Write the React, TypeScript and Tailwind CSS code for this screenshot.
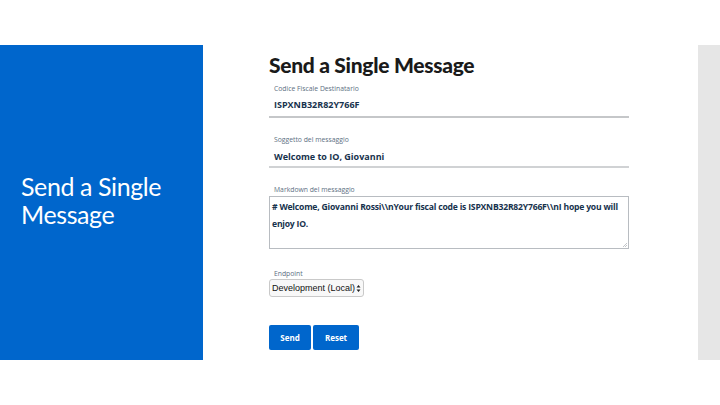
export default function App() {
  return (
    <div className="w-[720px] h-[405px] bg-white pt-[45px] font-['Open_Sans',sans-serif]">
      <div className="flex h-[315px]">
        {/* Left title panel */}
        <div className="w-[203px] bg-[#0066cc] flex items-center pl-[21px] pb-[6px]">
          <h2 className="text-white text-[25px] leading-[28px] font-['Lato',sans-serif] tracking-[-0.4px]">
            Send a Single
            <br />
            Message
          </h2>
        </div>

        {/* Form */}
        <div className="flex-1 pl-[66px] pt-[6px]">
          <div className="w-[360px] text-[#17324d]">
            <h1 className="text-[21px] leading-[28px] font-black font-['Lato',sans-serif] text-[#1a1a1a] tracking-[-0.3px]">
              Send a Single Message
            </h1>

            <div className="mt-[5px]">
              <label className="block text-[6.8px] leading-[10px] text-[#5c6f82] ml-[5px]">
                Codice Fiscale Destinatario
              </label>
              <div className="mt-[5px] text-[9px] leading-[12px] font-bold ml-[5px]">ISPXNB32R82Y766F</div>
              <div className="mt-[5px] h-[2px] bg-[#c5c7c9]" />
            </div>

            <div className="mt-[17px]">
              <label className="block text-[6.8px] leading-[10px] text-[#5c6f82] ml-[5px]">
                Soggetto del messaggio
              </label>
              <div className="mt-[6px] text-[9px] leading-[12px] font-bold ml-[5px]">Welcome to IO, Giovanni</div>
              <div className="mt-[3px] h-[2px] bg-[#d0d2d4]" />
            </div>

            <div className="mt-[17px]">
              <label className="block text-[6.8px] leading-[10px] text-[#5c6f82] ml-[5px]">
                Markdown del messaggio
              </label>
              <div className="mt-[1px] h-[53px] border border-[#b8bcc1] px-[2px] pt-[2px] relative overflow-hidden">
                <p className="text-[8.6px] leading-[17px] font-bold tracking-[-0.2px] whitespace-nowrap">
                  # Welcome, Giovanni Rossi\\nYour fiscal code is ISPXNB32R82Y766F\\nI hope you will
                  <br />
                  enjoy IO.
                </p>
                <svg className="absolute right-[1px] bottom-[1px]" width="5" height="5" viewBox="0 0 5 5">
                  <path d="M5 1 L1 5 M5 3 L3 5" stroke="#9aa0a6" strokeWidth="0.6" />
                </svg>
              </div>
            </div>

            <div className="mt-[20px]">
              <label className="block text-[6.8px] leading-[10px] text-[#5c6f82] ml-[5px]">Endpoint</label>
              <div className="flex items-center gap-[1px] h-[18px] w-[95px] border border-[#c9c9c9] rounded-[3px] bg-[#f8f8f8] pl-[2px] pr-[2px] text-[9px] leading-[12px] text-[#111] font-['Liberation_Sans',sans-serif]">
                <span className="flex-1 whitespace-nowrap">Development (Local)</span>
                <svg className="shrink-0" width="5" height="9" viewBox="0 0 5 9">
                  <path d="M0.5 3.5 L2.5 1 L4.5 3.5 Z M0.5 5.5 L2.5 8 L4.5 5.5 Z" fill="#222" />
                </svg>
              </div>
            </div>

            <div className="mt-[28px] flex gap-[2px]">
              <button className="w-[42px] h-[25px] bg-[#0066cc] rounded-[2px] text-white text-[8px] font-bold">
                Send
              </button>
              <button className="w-[46px] h-[25px] bg-[#0066cc] rounded-[2px] text-white text-[8px] font-bold">
                Reset
              </button>
            </div>
          </div>
        </div>

        {/* Right gray strip */}
        <div className="w-[22px] bg-[#e6e6e6]" />
      </div>
    </div>
  );
}
